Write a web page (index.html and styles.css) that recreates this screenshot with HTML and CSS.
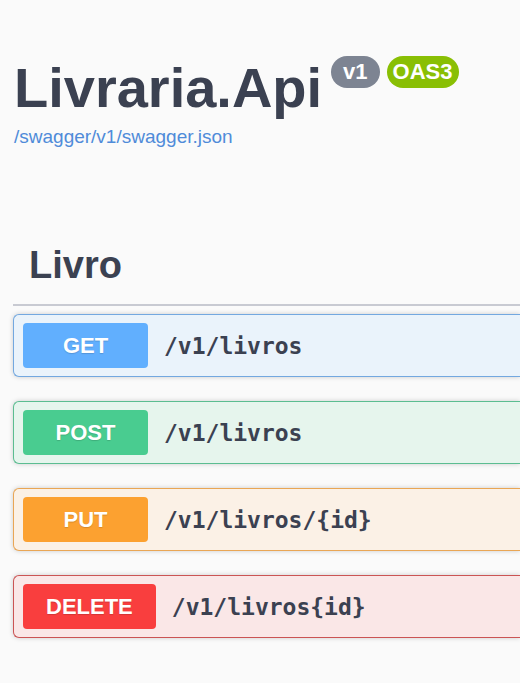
FILE: index.html
```html
<!DOCTYPE html>
<html lang="pt-BR">
<head>
<meta charset="utf-8">
<meta name="viewport" content="width=device-width, initial-scale=1">
<title>Livraria.Api</title>
<link rel="stylesheet" href="styles.css">
</head>
<body>
<header class="info">
  <div class="heading">
    <h1 class="title">Livraria.Api</h1>
    <span class="badge version">v1</span>
    <span class="badge spec">OAS3</span>
  </div>
  <a class="link" href="/swagger/v1/swagger.json">/swagger/v1/swagger.json</a>
</header>
<main>
  <h2 class="tag">Livro</h2>
  <div class="operations">
    <div class="operation get"><button class="method" type="button">GET</button><span class="path">/v1/livros</span></div>
    <div class="operation post"><button class="method" type="button">POST</button><span class="path">/v1/livros</span></div>
    <div class="operation put"><button class="method" type="button">PUT</button><span class="path">/v1/livros/{id}</span></div>
    <div class="operation delete"><button class="method" type="button">DELETE</button><span class="path">/v1/livros{id}</span></div>
  </div>
</main>
</body>
</html>
```
FILE: styles.css
```css
* {
  box-sizing: border-box;
}

body {
  margin: 0;
  padding: 56px 0 44px 13px;
  background: #fafafa;
  color: #3b4151;
  font-family: "Liberation Sans", Arial, sans-serif;
}

.info {
  padding-left: 1px;
}

.heading {
  display: flex;
  align-items: flex-start;
}

.title {
  margin: 0 9px 0 0;
  font-size: 56px;
  line-height: 64px;
}

.badge {
  margin-right: 7px;
  border-radius: 16px;
  color: #fff;
  font-size: 22px;
  font-weight: bold;
  line-height: 32px;
}

.version {
  padding: 0 12px;
  background: #7d8492;
}

.spec {
  padding: 0 6px;
  background: #89bf04;
}

.link {
  display: block;
  width: fit-content;
  margin-top: 5px;
  color: #4f8bd9;
  font-size: 19px;
  line-height: 24px;
  text-decoration: none;
}

.tag {
  margin: 80px 0 8px;
  padding: 12px 16px 15px;
  border-bottom: 2px solid #c8cad2;
  font-size: 38px;
  line-height: 48px;
}

.operations {
  display: grid;
  gap: 24px;
}

.operation {
  display: flex;
  align-items: center;
  gap: 16px;
  padding: 8px 9px;
  border: 1px solid;
  border-right: 0;
  border-radius: 6px 0 0 6px;
  box-shadow: 0 0 5px rgba(0, 0, 0, 0.19);
}

.method {
  min-width: 125px;
  height: 45px;
  padding: 0 23px;
  border: 0;
  border-radius: 4px;
  color: #fff;
  font-family: inherit;
  font-size: 22px;
  font-weight: bold;
  text-shadow: 0 1px 1px rgba(0, 0, 0, 0.15);
}

.path {
  font-family: "DejaVu Sans Mono", monospace;
  font-size: 23px;
  font-weight: bold;
  line-height: 28px;
}

.get {
  border-color: #73a8e0;
  background: #eaf3fb;
}

.get .method {
  background: #61affe;
}

.post {
  border-color: #5bbd91;
  background: #e6f5ed;
}

.post .method {
  background: #49cc90;
}

.put {
  border-color: #e9a655;
  background: #fbf1e6;
}

.put .method {
  background: #fca130;
}

.delete {
  border-color: #cb5454;
  background: #fae7e7;
}

.delete .method {
  background: #f93e3e;
}
```
